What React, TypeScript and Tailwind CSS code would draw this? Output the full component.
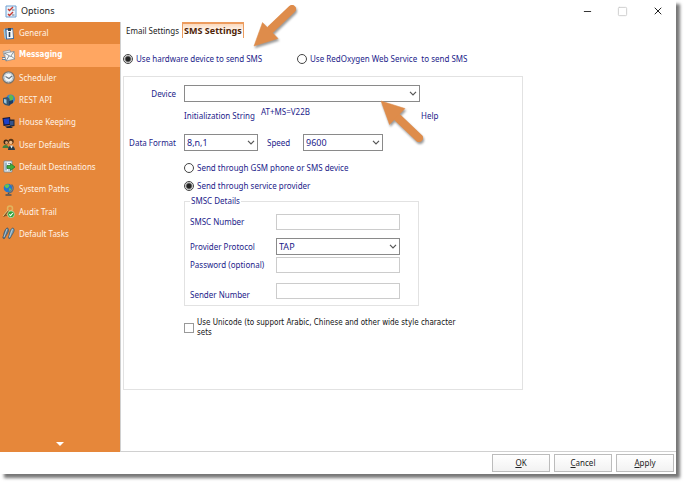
import * as React from 'react';
import { Minus, Square, X } from 'lucide-react';

const Clipboard = () => (
  <>
    <path d="M3 1.5 11 1l1 11-8 .5z" fill="#3c6fa8" />
    <path d="M4.500 3 10.500 2.500l.5 8.500-6 .5z" fill="#f4f8fc" />
    <path d="M6 1h3v3H6z" fill="#34444f" />
    <path d="M7.500 5v5" stroke="#273a4a" strokeWidth="1.600" />
    <path d="M3 1.500 1.500 3l1 8L4 12.500z" fill="#8fc6e8" />
  </>
);

const Envelopes = () => (
  <>
    <path d="M1 2.500 8 1l1 4-7 2z" fill="#dfe4e9" stroke="#7b8793" strokeWidth=".6" />
    <path d="M2.500 4 12 2.500l.8 7.500-9 2z" fill="#f7f7f7" stroke="#7b8793" strokeWidth=".7" />
    <path d="m2.500 4 6 3.500L12 2.500M4 12l3-5M12.800 10 9 7" fill="none" stroke="#6b7783" strokeWidth=".8" />
    <path d="M0 8.500h3M0 10.500h3.500" stroke="#66809c" />
    <path d="M1 9.500h2" stroke="#e9edf0" />
  </>
);

const Clock = () => (
  <>
    <circle cx="6.500" cy="6.500" r="5.700" fill="#dfe8ee" stroke="#77736e" strokeWidth="1.200" />
    <circle cx="6.500" cy="6.500" r="4.200" fill="#f4f7f9" stroke="#a9bccb" strokeWidth=".8" />
    <path d="m3.500 5.500 3.500 2L10 5" fill="none" stroke="#6b7782" strokeWidth="1.100" />
  </>
);

const Api = () => (
  <>
    <circle cx="8.500" cy="5" r="4.500" fill="#3a86c8" />
    <path d="M8 1c3 0 4 2 3 4S8 8 8 6s-2-3 0-5z" fill="#63b947" />
    <path d="m1 4 4.500-1 2 2v7L3 11 1 9z" fill="#35566f" />
    <path d="m2 5 2.500.5v4.500L2 8.500z" fill="#9cc5df" />
    <path d="m7 7 4-1v3l-4 2.500z" fill="#1e3c66" />
  </>
);

const Monitor = () => (
  <>
    <path d="M.5 2 8 1l1 8-7.500 1z" fill="#15193c" />
    <path d="m1.500 3 5.800-.8.7 5.600-5.500.8z" fill="#1d3fc7" />
    <path d="M7 3.500h5.500v6.500L8 11z" fill="#252938" />
    <path d="M8 5h3.500v4L8 9.500z" fill="#34548c" />
    <path d="M3 10.500 8 10l3 2H5z" fill="#1e2435" />
  </>
);

const Users = () => (
  <>
    <circle cx="4" cy="4" r="2.500" fill="#3a291b" />
    <circle cx="4.500" cy="4.500" r="1.500" fill="#d89d67" />
    <path d="M.5 10c0-4 6-4 6.500 0z" fill="#41813f" />
    <circle cx="9" cy="3.500" r="2.700" fill="#573416" />
    <circle cx="8.700" cy="4.500" r="1.700" fill="#f1c08d" />
    <path d="M6 12c0-6 6.500-6 7 0z" fill="#273a49" />
    <path d="m8 7.500 1.500 3L11 7.500z" fill="#f1efe9" />
  </>
);

const Destinations = () => (
  <>
    <path d="M2 1h8v11H2z" fill="#eef3f5" stroke="#6e8797" strokeWidth=".8" />
    <path d="M3 2.500h2v8H3z" fill="#9db8c8" />
    <path d="M6 3.500h3M6 10h3" stroke="#7d96a6" strokeWidth=".8" />
    <path d="M5 5.500h3.500v-2L13 7l-4.500 3.500v-2H5z" fill="#3fae3b" stroke="#1d6f27" strokeWidth=".7" />
  </>
);

const Globe = () => (
  <>
    <path d="M9.500 1.500c3 2.500 2 7.500-2.500 8.500" fill="none" stroke="#596a78" strokeWidth="1.100" />
    <circle cx="6" cy="5" r="4.300" fill="#2575cf" />
    <path d="M4 1.500c3-1 4 .5 3 2S5 6 3.500 4.500s-1-2 .5-3zM7 5l2.500 1L7.500 8.500z" fill="#62c553" />
    <path d="M6.500 9.500V11M3.500 12h6" stroke="#44525e" strokeWidth="1.400" />
  </>
);

const Audit = () => (
  <>
    <circle cx="8" cy="3.500" r="2.500" fill="none" stroke="#e2b45d" strokeWidth="1.500" />
    <path d="m6.500 5.500-5 6M3 9.500l1.500 1.500" stroke="#7c5527" strokeWidth="1.600" />
    <path d="m6 5-5 6" stroke="#f5d080" strokeWidth=".9" />
    <circle cx="9" cy="9.300" r="3.400" fill="#30a239" stroke="#dcedd9" strokeWidth=".6" />
    <path d="m7.300 9.300 1.300 1.400 2.200-2.700" fill="none" stroke="#fff" strokeWidth="1.100" />
  </>
);

const Tasks = () => (
  <>
    <path d="M5.500 1c2 1 1 4-.5 6l-2.500 4.500c-2 .5-2-1-1-3C2 5 3.500 1 5.500 1z" fill="#587a93" stroke="#334b5e" strokeWidth=".6" />
    <path d="M11 1c2 1 1 4-.5 6L8 11.500c-2 .5-2-1-1-3C7.500 5 9 1 11 1z" fill="#7299b2" stroke="#334b5e" strokeWidth=".6" />
    <path d="m5 2-3 8M10.500 2l-3 8" stroke="#c6dbe6" strokeWidth=".8" />
  </>
);

const menu = [
  { label: 'General', Icon: Clipboard },
  { label: 'Messaging', Icon: Envelopes },
  { label: 'Scheduler', Icon: Clock },
  { label: 'REST API', Icon: Api },
  { label: 'House Keeping', Icon: Monitor },
  { label: 'User Defaults', Icon: Users },
  { label: 'Default Destinations', Icon: Destinations },
  { label: 'System Paths', Icon: Globe },
  { label: 'Audit Trail', Icon: Audit },
  { label: 'Default Tasks', Icon: Tasks },
];

function Sidebar() {
  const [active, setActive] = React.useState('Messaging');

  return (
    <nav className="flex w-[120px] shrink-0 flex-col justify-between bg-[#e6873a]">
      <ul className="flex h-[223px] flex-col">
        {menu.map(({ label, Icon }) => (
          <li key={label} className="flex-1">
            <button
              type="button"
              onClick={() => setActive(label)}
              className={`flex h-full w-full items-center gap-1 pl-[2px] text-left whitespace-nowrap ${
                active === label
                  ? "bg-[#ffa661] font-['DejaVu_Sans_Condensed',sans-serif] font-bold text-white"
                  : 'text-[#fff3e6]'
              }`}
            >
              <svg viewBox="0 0 13 13" className="size-[13px] shrink-0"><Icon /></svg>
              {label}
            </button>
          </li>
        ))}
      </ul>
      <button type="button" aria-label="More" className="flex h-[10px] justify-center">
        <svg viewBox="0 0 8 4" className="h-1 w-2"><path d="M0 0h8L4 4z" fill="#fff" /></svg>
      </button>
    </nav>
  );
}

function Radio({ name, label, defaultChecked }: { name: string; label: string; defaultChecked?: boolean }) {
  return (
    <label className="flex items-center gap-[3px] whitespace-pre">
      <input
        type="radio"
        name={name}
        defaultChecked={defaultChecked}
        className="size-[10px] shrink-0 appearance-none rounded-full border border-[#444] bg-white checked:bg-[radial-gradient(circle,#222_2px,transparent_4px)]"
      />
      {label}
    </label>
  );
}

function Select({ id, options, className }: { id: string; options: string[]; className: string }) {
  return (
    <div className={`relative ${className}`}>
      <select id={id} className="block h-[17px] w-full appearance-none border border-[#8a8a8a] bg-white pr-4 pl-[2px] text-[9px] leading-3">
        {options.map((o) => <option key={o}>{o}</option>)}
      </select>
      <svg viewBox="0 0 8 5" className="pointer-events-none absolute top-[6px] right-[3px] h-[5px] w-2">
        <path d="M1 .8 4 3.800 7 .8" fill="none" stroke="#555" strokeWidth="1.200" />
      </svg>
    </div>
  );
}

const inputStyle = 'block h-4 w-[124px] border border-[#ccc] bg-white px-1';

function Arrow({ className, turn }: { className: string; turn?: boolean }) {
  return (
    <svg viewBox="0 0 50 50" className={`pointer-events-none absolute size-[50px] drop-shadow-[1px_2px_1px_#0006] ${className}`}>
      <g transform={turn ? 'matrix(1 0 0 -1 0 50)' : undefined} fill="#de8c4b" stroke="#de8c4b">
        <path d="M20 27 41 7" strokeWidth="8" strokeLinecap="round" />
        <path d="m3 44 8.500-23.500 15.500 16z" strokeWidth=".5" />
      </g>
    </svg>
  );
}

function DevicePanel() {
  return (
    <section className="mt-[11px] h-[314px] w-[400px] border border-[#e2e2e2] pt-2 text-[#1c1c8a]">
      <div className="grid grid-cols-[60px_1fr] items-center">
        <label htmlFor="device" className="pr-2 text-right">Device</label>
        <Select id="device" options={['']} className="w-[236px]" />
        <div className="col-start-2 mt-1 flex h-4">
          <span className="w-[77px] self-end whitespace-nowrap">Initialization String</span>
          <span className="w-40">AT+MS=V22B</span>
          <a href="#help" className="self-end">Help</a>
        </div>
      </div>
      <div className="mt-3 grid grid-cols-[60px_75px_44px_1fr] items-center">
        <label htmlFor="format" className="pr-2 text-right whitespace-nowrap">Data Format</label>
        <Select id="format" options={['8,n,1']} className="w-[74px]" />
        <label htmlFor="speed" className="pl-2">Speed</label>
        <Select id="speed" options={['9600', '19200']} className="w-20" />
      </div>
      <div className="ml-[60px]">
        <div className="mt-[11px] flex flex-col gap-[6px]">
          <Radio name="route" label="Send through GSM phone or SMS device" />
          <Radio name="route" label="Send through service provider" defaultChecked />
        </div>
        <fieldset className="mt-[3px] h-[111px] w-[235px] border border-[#e2e2e2] pl-[5px]">
          <legend className="px-[1px]">SMSC Details</legend>
          <div className="grid grid-cols-[86px_1fr] items-center pt-[7px]">
            <label htmlFor="smsc">SMSC Number</label>
            <input id="smsc" className={inputStyle} />
            <label htmlFor="protocol" className="mt-2">Provider Protocol</label>
            <Select id="protocol" options={['TAP', 'UCP']} className="mt-2 w-[124px]" />
            <label htmlFor="password" className="mt-[2px]">Password (optional)</label>
            <input id="password" type="password" className={`mt-[2px] ${inputStyle}`} />
            <label htmlFor="sender" className="mt-4">Sender Number</label>
            <input id="sender" className={`mt-2 ${inputStyle}`} />
          </div>
        </fieldset>
        <label className="mt-3 flex w-[285px] items-center gap-[3px] font-['DejaVu_Sans_Condensed',sans-serif] leading-[10px] text-[#111]">
          <input type="checkbox" className="size-[10px] shrink-0 appearance-none border border-[#999] bg-white checked:bg-[#23238e]" />
          Use Unicode (to support Arabic, Chinese and other wide style character sets
        </label>
      </div>
    </section>
  );
}

const buttonStyle = 'h-[18px] w-[58px] border border-[#bcbcbc] bg-linear-to-b from-white to-[#f2f2f2] text-[#222]';

export default function App() {
  return (
    <div className="flex min-h-screen bg-white pr-3 pb-3 font-['Noto_Sans',sans-serif] text-[8px] leading-3">
      <div className="relative flex flex-1 flex-col bg-white shadow-[4px_4px_3px_#0008]">
        <header className="flex h-[22px] items-center pr-3 pl-[5px]">
          <svg viewBox="0 0 12 13" className="h-[13px] w-3">
            <path d="M1 1h10v11H1z" fill="#e9f2fb" stroke="#6c9fd2" />
            <path d="m3 4 1.500 1.500L8 2M3 9l1.500 1.500L8 7" fill="none" stroke="#c9382f" strokeWidth="1.400" />
            <path d="M7 5h2.500M7 10h2.500" stroke="#6a7380" />
          </svg>
          <h1 className="ml-1 flex-1 text-[9px] font-normal text-[#222]">Options</h1>
          <div className="flex items-center gap-6 text-[#222]">
            <button type="button" aria-label="Minimize"><Minus className="size-[11px]" strokeWidth={2} /></button>
            <button type="button" aria-label="Maximize" className="text-[#ccc]">
              <Square className="size-[11px]" strokeWidth={2} />
            </button>
            <button type="button" aria-label="Close"><X className="size-3" strokeWidth={2} /></button>
          </div>
        </header>
        <div className="flex flex-1">
          <Sidebar />
          <main className="flex-1 border-b border-l border-[#d0d0d0] pl-[2px]">
            <div role="tablist" className="flex h-4 items-stretch text-[#222]">
              <button type="button" role="tab" aria-selected="false" className="px-[3px] pt-[2px]">Email Settings</button>
              <button
                type="button"
                role="tab"
                aria-selected="true"
                className="border-x border-t-2 border-[#ec9c5f] bg-linear-to-b from-[#fbd9bd] to-white to-60% px-[1px] text-[9px] font-bold text-[#4f2508]"
              >
                SMS Settings
              </button>
            </div>
            <div className="mt-[15px] grid grid-cols-[174px_1fr] text-[#1c1c8a]">
              <Radio name="sender" label="Use hardware device to send SMS" defaultChecked />
              <Radio name="sender" label="Use RedOxygen Web Service  to send SMS" />
            </div>
            <DevicePanel />
          </main>
        </div>
        <footer className="flex h-[22px] items-center justify-end gap-1 pr-[2px]">
          <button type="button" className={buttonStyle}><u>O</u>K</button>
          <button type="button" className={buttonStyle}><u>C</u>ancel</button>
          <button type="button" className={buttonStyle}><u>A</u>pply</button>
        </footer>
        <Arrow className="top-[2px] left-[251px]" />
        <Arrow className="top-[95px] left-[378px]" turn />
      </div>
    </div>
  );
}
